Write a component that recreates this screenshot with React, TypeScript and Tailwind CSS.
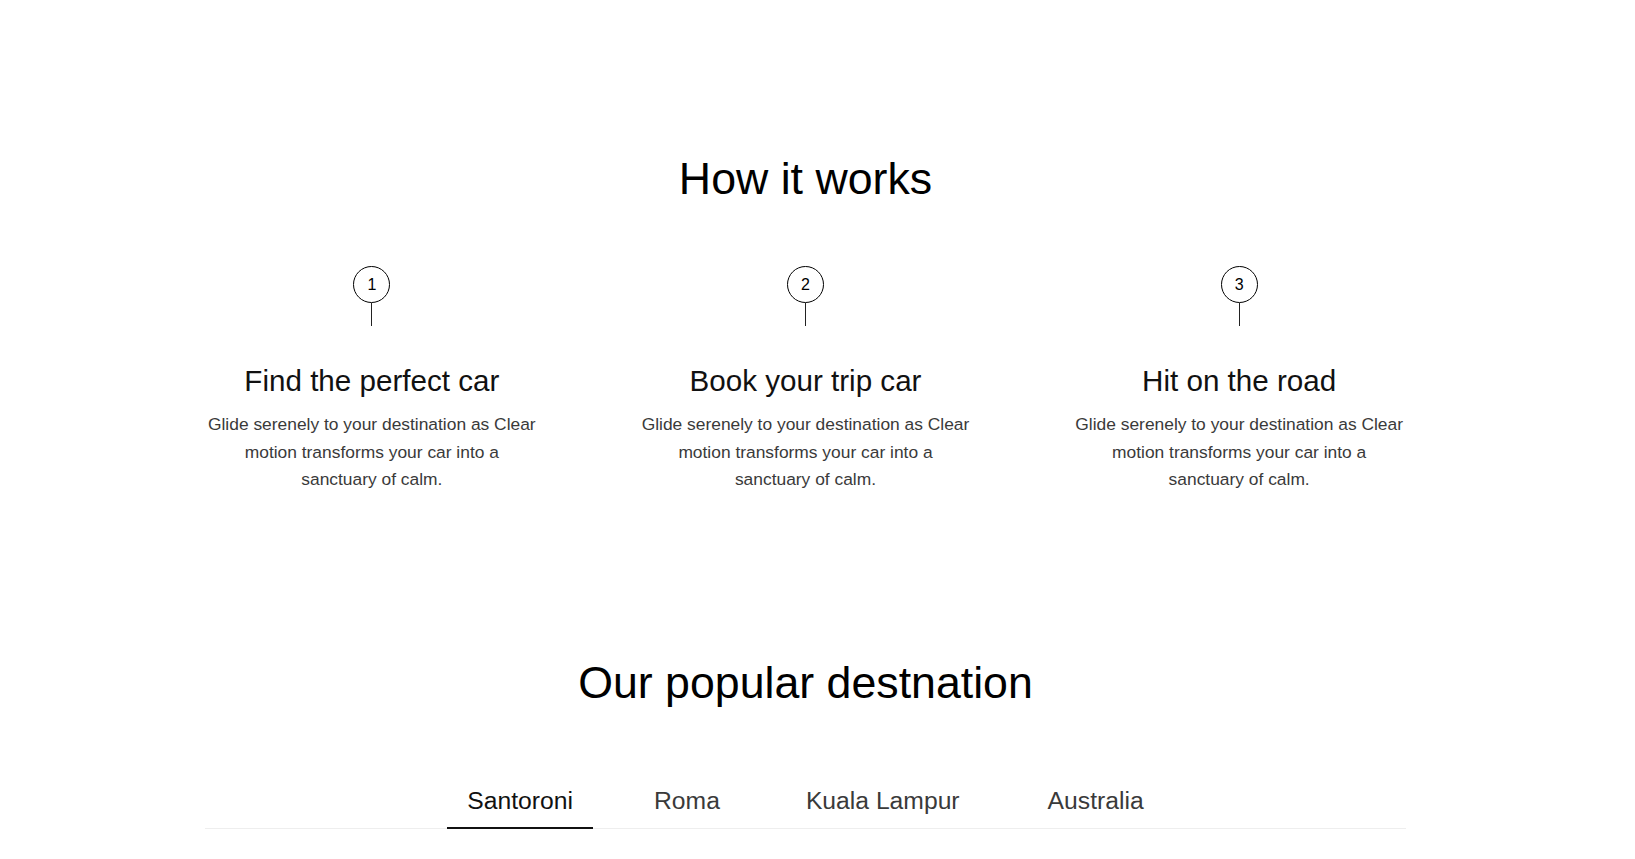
import { useState } from 'react'

const steps = [
  { n: 1, title: 'Find the perfect car' },
  { n: 2, title: 'Book your trip car' },
  { n: 3, title: 'Hit on the road' },
]

// spacing before each tab, tuned to the design
const tabs = [
  { label: 'Santoroni', space: '' },
  { label: 'Roma', space: 'ml-[41px]' },
  { label: 'Kuala Lampur', space: 'ml-[46px]' },
  { label: 'Australia', space: 'ml-[48px]' },
]

const body = 'Glide serenely to your destination as Clear motion transforms your car into a sanctuary of calm.'

export default function App() {
  const [active, setActive] = useState(0)

  return (
    <div
      className="min-h-screen bg-white text-black"
      style={{ fontFamily: '"Liberation Sans", Arial, Helvetica, sans-serif' }}
    >
      <div className="w-[1201px] ml-[205px] pt-[153px]">
        {/* How it works */}
        <section>
          <h2 className="text-center text-[44.7px] leading-[52px] font-normal text-black">How it works</h2>

          <div className="grid grid-cols-3 gap-[100px] mt-[61px]">
            {steps.map((s) => (
              <div key={s.n} className="flex flex-col items-center text-center">
                <div className="w-[37px] h-[37px] rounded-full border border-black flex items-center justify-center text-[16px] leading-none text-black">
                  {s.n}
                </div>
                <div className="w-px h-[23px] bg-[#222]" />
                <h3 className="mt-[37px] text-[29.6px] leading-[36px] font-normal text-[#111]">{s.title}</h3>
                <p className="mt-[12px] max-w-[330px] text-[17.4px] leading-[27.5px] text-[#3a3a3a]">{body}</p>
              </div>
            ))}
          </div>
        </section>

        {/* Popular destination */}
        <section className="mt-[163px]">
          <h2 className="text-center text-[44.7px] leading-[52px] font-normal text-black">Our popular destnation</h2>

          <div className="mt-[76px] flex justify-center border-b border-[#eeeeee]">
            {tabs.map((t, i) => (
              <button
                key={t.label}
                onClick={() => setActive(i)}
                className={
                  (i === active
                    ? 'px-5 pb-[10px] -mb-px border-b-2 border-[#111] text-[24.7px] leading-[32px] text-[#111] '
                    : 'px-5 pb-[10px] -mb-px border-b-2 border-transparent text-[24.7px] leading-[32px] text-[#3a3a3a] ') + t.space
                }
              >
                {t.label}
              </button>
            ))}
          </div>
        </section>
      </div>
    </div>
  )
}
